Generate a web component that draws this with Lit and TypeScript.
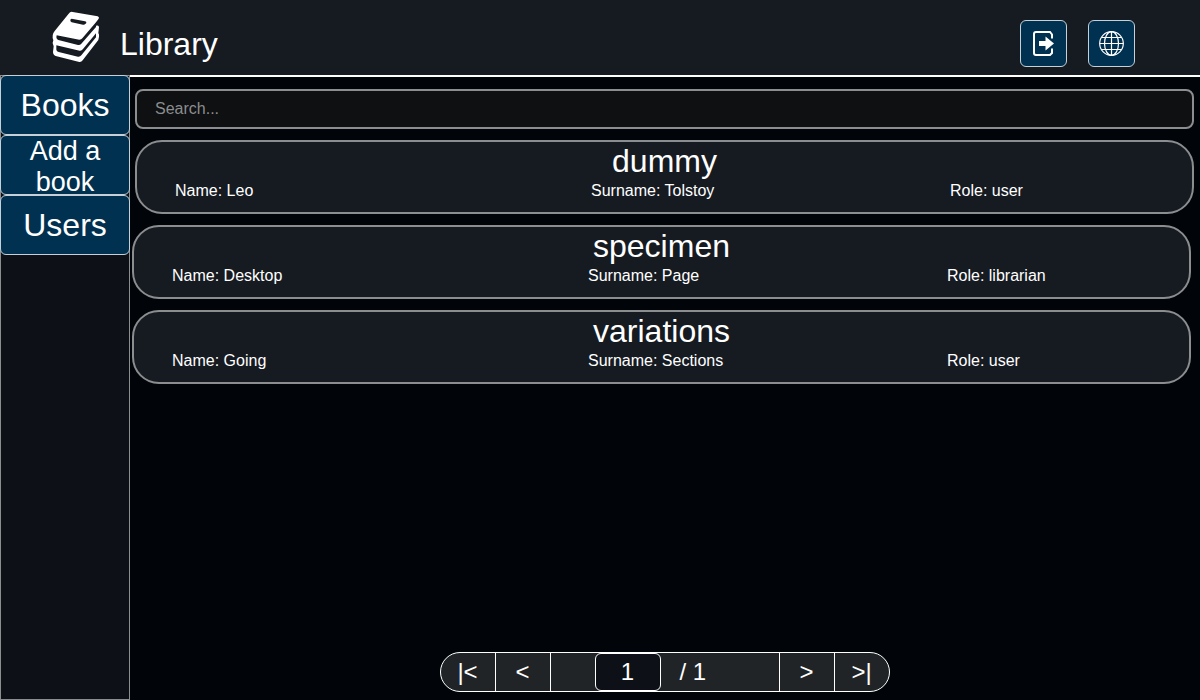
import { LitElement, html, css } from "lit";
import { customElement, property, state } from "lit/decorators.js";

interface User {
  login: string;
  name: string;
  surname: string;
  role: string;
}

@customElement("user-card")
class UserCard extends LitElement {
  @property({ attribute: false }) user!: User;

  static styles = css`
    :host {
      display: block;
      box-sizing: border-box;
      height: 74px;
      padding: 0 38px;
      border: 2px solid #8b8d8f;
      border-radius: 27px;
      background: #161b22;
      color: #fff;
    }
    .login {
      margin: 0;
      font-size: 32px;
      line-height: 38px;
      font-weight: 400;
      text-align: center;
    }
    .details {
      display: grid;
      grid-template-columns: 416fr 359fr 204fr;
      font-size: 16px;
      line-height: 22px;
    }
  `;

  render() {
    const { login, name, surname, role } = this.user;
    return html`
      <h2 class="login">${login}</h2>
      <div class="details">
        <span>Name: ${name}</span>
        <span>Surname: ${surname}</span>
        <span>Role: ${role}</span>
      </div>
    `;
  }
}

@customElement("page-switcher")
class PageSwitcher extends LitElement {
  @property({ type: Number }) total = 1;
  @state() private page = 1;

  static styles = css`
    :host {
      display: flex;
      box-sizing: border-box;
      width: 450px;
      height: 40px;
      border: 1px solid #fff;
      border-radius: 25px;
      overflow: hidden;
      background: #212426;
      color: #fff;
      font-size: 24px;
      line-height: 38px;
    }
    button,
    input {
      box-sizing: border-box;
      margin: 0;
      padding: 0;
      font: inherit;
      color: inherit;
    }
    button {
      width: 55px;
      border: 0;
      border-right: 1px solid #fff;
      background: none;
    }
    .after {
      border-right: 0;
      border-left: 1px solid #fff;
    }
    .position {
      flex: 1;
      display: flex;
      gap: 19px;
      padding-left: 44px;
    }
    input {
      width: 66px;
      border: 1px solid #fff;
      border-radius: 6px;
      background: #0d1117;
      text-align: center;
    }
  `;

  private go(page: number) {
    this.page = Math.min(this.total, Math.max(1, page));
  }

  render() {
    return html`
      <button aria-label="First page" @click=${() => this.go(1)}>|&lt;</button>
      <button aria-label="Previous page" @click=${() => this.go(this.page - 1)}>&lt;</button>
      <div class="position">
        <input aria-label="Page" .value=${String(this.page)} />
        <span>/ ${this.total}</span>
      </div>
      <button class="after" aria-label="Next page" @click=${() => this.go(this.page + 1)}>&gt;</button>
      <button class="after" aria-label="Last page" @click=${() => this.go(this.total)}>&gt;|</button>
    `;
  }
}

@customElement("app-root")
class AppRoot extends LitElement {
  @state() private users: User[] = [
    { login: "dummy", name: "Leo", surname: "Tolstoy", role: "user" },
    { login: "specimen", name: "Desktop", surname: "Page", role: "librarian" },
    { login: "variations", name: "Going", surname: "Sections", role: "user" },
  ];

  static styles = css`
    :host {
      display: flex;
      flex-direction: column;
      min-height: 100vh;
      background: #010409;
      color: #fff;
      font-family: "Liberation Sans", Arial, sans-serif;
    }
    header {
      display: flex;
      align-items: center;
      box-sizing: border-box;
      height: 75px;
      padding: 12px 65px 0 45px;
      background: #161b22;
    }
    .brand {
      display: flex;
      align-items: center;
      gap: 15px;
      margin: 0 auto 0 0;
      font-size: 32px;
      line-height: 36px;
      font-weight: 400;
    }
    .logo {
      width: 60px;
      height: 64px;
      margin-top: -13px;
    }
    .actions {
      display: flex;
      gap: 21px;
    }
    .action {
      display: grid;
      place-items: center;
      box-sizing: border-box;
      width: 47px;
      height: 47px;
      padding: 0;
      border: 1px solid #c5d0d8;
      border-radius: 6px;
      background: #003150;
      color: #fff;
    }
    .body {
      flex: 1;
      display: flex;
    }
    nav {
      display: flex;
      flex-direction: column;
      box-sizing: border-box;
      width: 130px;
      border: 1px solid #8b8d8f;
      background: #0d1117;
    }
    .tab {
      display: flex;
      align-items: center;
      justify-content: center;
      box-sizing: border-box;
      height: 60px;
      margin: 0 -1px;
      border: 1px solid #c5d0d8;
      border-radius: 6px;
      background: #003150;
      color: #fff;
      font-size: 32px;
      line-height: 36px;
      text-align: center;
      text-decoration: none;
    }
    .tab:first-child {
      margin-top: -1px;
    }
    .long {
      padding-top: 4px;
      font-size: 27px;
      line-height: 31px;
    }
    main {
      flex: 1;
      display: flex;
      flex-direction: column;
      border-top: 2px solid #fff;
      padding: 12px 6px 8px 5px;
    }
    .search {
      box-sizing: border-box;
      width: 100%;
      height: 40px;
      padding: 0 18px;
      border: 2px solid #8b8d8f;
      border-radius: 8px;
      background: #0f1011;
      color: #fff;
      font: inherit;
      font-size: 16px;
    }
    .search::placeholder {
      color: #8b8d8f;
    }
    .users {
      flex: 1;
      display: flex;
      flex-direction: column;
      gap: 11px;
      margin: 0;
      padding: 11px 0 0;
      list-style: none;
    }
    .users li + li {
      margin: 0 3px 0 -3px;
    }
    page-switcher {
      align-self: center;
    }
  `;

  render() {
    return html`
      <header>
        <h1 class="brand">
          <svg class="logo" viewBox="0 0 180 192" fill="#fff" aria-hidden="true">
            <path
              fill-rule="evenodd"
              d="M83 21 158 34Q164 36 161 41L153 52V62Q162 59 162 67L160 84Q163 88 162 95L160 105 113 166Q109 172 103 171L35 154Q24 151 24 141L26 124Q20 115 25 106Q19 90 29 78L71 26Q76 19 83 21ZM80 41Q76 42 76 46Q76 50 80 52L114 59Q118 60 121 57L124 54Q125 50 120 49ZM35 91Q32 102 40 105L99 120Q105 121 109 116L153 66V52L112 100Q109 104 103 104ZM34 121V134Q35 139 41 141L99 155Q105 156 109 151L153 97V85L114 132Q110 138 104 137Z"
            />
          </svg>
          Library
        </h1>
        <div class="actions">
          <button class="action" aria-label="Log out">
            <svg width="25" height="27" viewBox="0 0 25 27" fill="none" stroke="currentColor" stroke-width="2" aria-hidden="true">
              <path d="M21 8.500V4.500L19 2H5Q3 2 3 4V23Q3 25 5 25H19L21 23V18.500" />
              <path fill="currentColor" stroke="none" d="M8 11H14.500V6.500L23 13.500 14.500 20.500V16H8Z" />
            </svg>
          </button>
          <button class="action" aria-label="Language">
            <svg width="25" height="25" viewBox="0 0 25 25" fill="none" stroke="currentColor" stroke-width="1.200" aria-hidden="true">
              <circle cx="12.500" cy="12.500" r="11.800" />
              <ellipse cx="12.500" cy="12.500" rx="7" ry="11.800" />
              <path d="M12.500 .7V24.300M.7 12.500H24.300M2.500 6.500H22.500M2.500 18.500H22.500" />
            </svg>
          </button>
        </div>
      </header>
      <div class="body">
        <nav>
          <a class="tab" href="#books">Books</a>
          <a class="tab long" href="#add">Add a<br />book</a>
          <a class="tab" href="#users">Users</a>
        </nav>
        <main>
          <input class="search" type="search" placeholder="Search..." aria-label="Search" />
          <ul class="users">
            ${this.users.map((user) => html`<li><user-card .user=${user}></user-card></li>`)}
          </ul>
          <page-switcher total="1"></page-switcher>
        </main>
      </div>
    `;
  }
}
